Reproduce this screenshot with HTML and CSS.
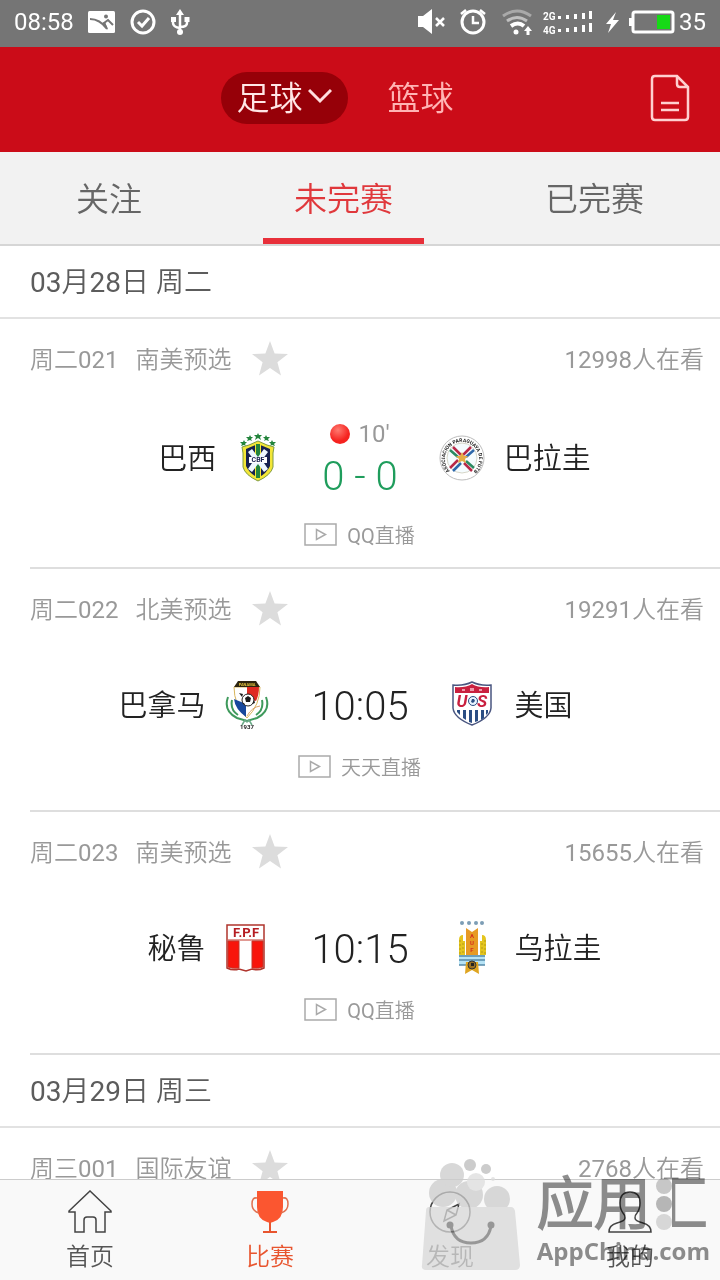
FILE: index.html
```html
<!DOCTYPE html>
<html lang="zh-CN">
<head>
  <meta charset="UTF-8">
  <meta name="viewport" content="width=device-width, initial-scale=1.0">
  <title>比赛</title>
  <link rel="stylesheet" href="styles.css">
</head>
<body>
  <!-- shared icons -->
  <svg class="sprite" aria-hidden="true">
    <symbol id="star" viewBox="0 0 36 36">
      <path fill="#dcdcdc" d="M18 0l4.600 12.600L36 13l-10.600 8.300L29 34.500 18 27 7 34.500l3.600-13.200L0 13l13.400-.400z"/>
    </symbol>
    <symbol id="play" viewBox="0 0 33 23">
      <rect x="1" y="1" width="31" height="21" fill="none" stroke="#aaa" stroke-width="1.500"/>
      <path d="M12.500 6.500v10l9-5z" fill="none" stroke="#aaa" stroke-width="1.500"/>
    </symbol>
  </svg>

  <div class="app">
    <div class="status">
      <span>08:58</span>
      <svg class="status-left" viewBox="0 0 104 28" width="104" height="28" aria-hidden="true">
        <rect x="1" y="3" width="27" height="22" rx="1.500" fill="#fff"/>
        <path d="M3 11c6 0 12 3 17 10l-3-6 4-3 5 5" fill="none" stroke="#757575" stroke-width="2"/>
        <path d="M15 15l3-1 3 8z" fill="#757575"/>
        <circle cx="19" cy="8.500" r="2" fill="#757575"/>
        <circle cx="56" cy="14" r="11" fill="none" stroke="#fff" stroke-width="3"/>
        <path d="M51 14l4 4 7-8" fill="none" stroke="#fff" stroke-width="3"/>
        <path d="M93 4v20M86 11v4q0 4 7 5M100 11v4q0 4-7 4" fill="none" stroke="#fff" stroke-width="2.500"/>
        <path d="M93 1l4 6h-8zM84 9h5v5h-5zM97.500 9h5v5h-5z" fill="#fff"/>
        <circle cx="93" cy="24" r="3" fill="#fff"/>
      </svg>
      <svg class="status-right" viewBox="0 0 260 28" width="260" height="28" aria-hidden="true">
        <path d="M1 8h5l9-7v25l-9-7H1z" fill="#fff"/>
        <path d="M19 10l8 8M27 10l-8 8" stroke="#fff" stroke-width="2.500"/>
        <circle cx="56" cy="14" r="11" fill="none" stroke="#fff" stroke-width="3"/>
        <path d="M56 8v7h6M44 6l5-4M68 6l-5-4" fill="none" stroke="#fff" stroke-width="2.500"/>
        <path d="M86 8q14-10 28 0" fill="none" stroke="#a9a9a9" stroke-width="3"/>
        <path d="M90 13q10-7 20 0" fill="none" stroke="#c0c0c0" stroke-width="3"/>
        <path d="M94 18q7-5 13 0" fill="none" stroke="#fff" stroke-width="4"/>
        <circle cx="99" cy="24" r="2.500" fill="#fff"/>
        <path d="M111 18l4 5h-2.500v4h-3v-4H107z" fill="#fff"/>
        <text class="status-net" x="126" y="12">2G</text>
        <text class="status-net" x="126" y="26">4G</text>
        <g fill="#fff">
          <path d="M141 8h3v3h-3zM149 7h3v4h-3zM157 6h3v5h-3zM165 5h3v6h-3zM172 3h3v8h-3z"/>
          <path d="M141 21h3v3h-3zM149 20h3v4h-3zM157 19h3v5h-3zM165 17h3v7h-3zM172 15h3v9h-3z"/>
          <path d="M199 4l-10 12h5l-3 9 11-13h-6z"/>
          <path d="M212 10h3v8h-3z"/>
        </g>
        <rect x="216" y="4" width="40" height="20" rx="2" fill="none" stroke="#fff" stroke-width="3"/>
        <rect x="240" y="7" width="13" height="14" fill="#16d916"/>
      </svg>
      <span>35</span>
    </div>

    <header class="topbar">
      <div class="sports">
        <button class="sport sport-on" type="button">足球
          <svg viewBox="0 0 24 16" width="24" height="16" aria-hidden="true"><path d="M1 2l11 11L23 2" fill="none" stroke="#ffdede" stroke-width="3"/></svg>
        </button>
        <button class="sport" type="button">篮球</button>
      </div>
      <button class="orders" type="button" aria-label="订单">
        <svg viewBox="0 0 40 48" width="40" height="48" aria-hidden="true">
          <path d="M5 2h22l11 11v30q0 3-3 3H5q-3 0-3-3V5q0-3 3-3zM27 2v8q0 3 3 3h8M11 29h18M11 36h18" fill="none" stroke="#ffd0d0" stroke-width="2.500"/>
        </svg>
      </button>
    </header>

    <div class="tabs">
      <button class="tab" type="button"><span>关注</span></button>
      <button class="tab tab-on" type="button"><span>未完赛</span></button>
      <button class="tab" type="button"><span>已完赛</span></button>
    </div>

    <main class="list">
      <h2 class="date">03月28日 周二</h2>

      <article class="match match-live">
        <div class="meta">
          <span>周二021</span><span>南美预选</span>
          <button class="fav" type="button" aria-label="收藏"><svg width="36" height="36"><use href="#star"/></svg></button>
          <span class="viewers">12998人在看</span>
        </div>
        <div class="teams">
          <div class="team home">
            <span>巴西</span>
            <svg class="crest" viewBox="0 0 44 50" aria-hidden="true">
              <g fill="#23843c">
                <path d="M22 0l1 2h3l-2 2 1 3-3-2-3 2 1-3-2-2h3zM14 2l1 2h2l-2 2 1 2-2-1-3 1 1-2-2-2h3zM30 2l1 2h3l-2 2 1 2-3-1-2 1 1-2-2-2h2zM8 7l1 2h2l-2 2 1 2-2-1-3 1 1-2-2-2h3zM36 7l1 2h3l-2 2 1 2-3-1-2 1 1-2-2-2h2z"/>
              </g>
              <path d="M6 14l7-2 9-4 9 4 7 2-1 6v14q-2 8-15 14Q9 42 7 34V20z" fill="#f3e637" stroke="#7f9a42" stroke-width="1"/>
              <path d="M10 16l12-5 12 5v17q-3 7-12 12-9-5-12-12z" fill="#17214f"/>
              <path d="M19 11h6v34h-6z" fill="#f3e637"/>
              <path d="M20 11h4v34h-4z" fill="#23843c"/>
              <path d="M12 19l4-3 6 8 6-8 4 3-6 8 6 9-4 3-6-8-6 8-4-3 6-9z" fill="#eef8ff"/>
              <path d="M13 24h18v6H13z" fill="#fff"/>
              <text x="22" y="29" class="crest-text" fill="#17214f">CBF</text>
            </svg>
          </div>
          <div class="center">
            <div class="minute"><i class="live-dot"></i>10'</div>
            <div class="score">0 - 0</div>
          </div>
          <div class="team away">
            <svg class="crest" viewBox="0 0 44 50" aria-hidden="true">
              <defs><path id="ring" d="M10 38A17 17 0 1 1 34 38"/></defs>
              <circle cx="22" cy="25" r="22" fill="#fff" stroke="#bdbdbd"/>
              <circle cx="22" cy="25" r="15" fill="#f5fcff" stroke="#d6d6c8"/>
              <text class="crest-ring" fill="#222"><textPath href="#ring">ASOCIACION PARAGUAYA DE FUTBOL</textPath></text>
              <g stroke-width="2.500">
                <path d="M10 17l8 7M26 28l8 7" stroke="#2a8a62"/>
                <path d="M13 14l8 8M24 30l8 8" stroke="#b82948"/>
                <path d="M31 14l-8 8M18 27l-8 8" stroke="#b82948"/>
                <path d="M34 17l-8 7M21 30l-8 8" stroke="#2d68aa"/>
              </g>
              <path d="M22 19l2 4h4l-3 3 1 4-4-2-4 2 1-4-3-3h4z" fill="#e6ad45"/>
            </svg>
            <span>巴拉圭</span>
          </div>
        </div>
        <a class="stream" href="#"><svg width="33" height="23" aria-hidden="true"><use href="#play"/></svg>QQ直播</a>
      </article>

      <article class="match">
        <div class="meta">
          <span>周二022</span><span>北美预选</span>
          <button class="fav" type="button" aria-label="收藏"><svg width="36" height="36"><use href="#star"/></svg></button>
          <span class="viewers">19291人在看</span>
        </div>
        <div class="teams">
          <div class="team home">
            <span>巴拿马</span>
            <svg class="crest" viewBox="0 0 44 50" aria-hidden="true">
              <path d="M3 17q-5 14 9 21l10 3 10-3q14-7 9-21M7 20q-2 10 6 15M37 20q2 10-6 15" fill="none" stroke="#3f9a5c" stroke-width="2"/>
              <path d="M9 7h26q0 18-13 31Q9 25 9 7z" fill="#fff" stroke="#d8b55a"/>
              <path d="M22 7h12q0 8-3 14l-9-3z" fill="#df2a22"/>
              <path d="M9 19l12 5v13Q10 29 9 19z" fill="#17489c"/>
              <path d="M9 7l4-6h18l4 6z" fill="#2d2510"/>
              <text x="22" y="6" class="crest-tiny" fill="#e5c33c">PANAMA</text>
              <circle cx="23" cy="20" r="6" fill="#fff" stroke="#222"/>
              <path d="M20 18l3-2 3 2-1 4h-4zM14 13l4 1-1 3zM27 24l3-1-1-3zM17 22l3 2-1 1z" fill="#1b1b1b"/>
              <path d="M35 26q-8 1-13 10" stroke="#dca36c" fill="none"/>
              <path d="M17 45l3-5 2 2 2-2 3 5" fill="none" stroke="#6aa987" stroke-width="1.500"/>
              <text x="22" y="49" class="crest-small" fill="#222">1937</text>
            </svg>
          </div>
          <div class="center"><div class="time">10:05</div></div>
          <div class="team away">
            <svg class="crest" viewBox="0 0 44 50" aria-hidden="true">
              <path d="M2 5q11 1 19-3 8 4 19 3v23q-1 10-19 17Q3 38 2 28z" fill="#fff" stroke="#4a5680" stroke-width="1.500"/>
              <path d="M4 7q10 1 17-3 7 4 17 3v6H4z" fill="#c9203f"/>
              <path d="M6 30h3v5l-3-3zM12 30h3v10l-3-2zM18 30h3v13l-3-1zM24 30h3v11l-3 1zM30 30h3v8l-3 2zM35 30h2v3l-2 2z" fill="#2b4d83"/>
              <text x="11" y="27" class="crest-us" fill="#c9203f">U</text>
              <text x="31" y="27" class="crest-us" fill="#c9203f">S</text>
              <circle cx="22" cy="21" r="4.500" fill="#e8f4ff" stroke="#2b4d83"/>
              <path d="M21 19h2l1 2-2 2-2-1z" fill="#2b4d83"/>
              <path d="M11 9h3v2h-3zM19 8h4v3h-4zM28 9h3v2h-3z" fill="#ef9aac"/>
            </svg>
            <span>美国</span>
          </div>
        </div>
        <a class="stream" href="#"><svg width="33" height="23" aria-hidden="true"><use href="#play"/></svg>天天直播</a>
      </article>

      <article class="match">
        <div class="meta">
          <span>周二023</span><span>南美预选</span>
          <button class="fav" type="button" aria-label="收藏"><svg width="36" height="36"><use href="#star"/></svg></button>
          <span class="viewers">15655人在看</span>
        </div>
        <div class="teams">
          <div class="team home">
            <span>秘鲁</span>
            <svg class="crest" viewBox="0 0 44 50" aria-hidden="true">
              <path d="M2 2h37v43q-6 3-12 1l-6 2-7-2q-6 2-12-1z" fill="#fff" stroke="#b0342c" stroke-width="1.500"/>
              <path d="M3 17h35M3 18h11v27q-6 1-11-1zM27 18h11v26q-5 2-11 1z" fill="#f8150b" stroke="#c3372a" stroke-width="1"/>
              <text x="21" y="14" class="crest-fpf" fill="#b51d22">F.P.F</text>
            </svg>
          </div>
          <div class="center"><div class="time">10:15</div></div>
          <div class="team away">
            <svg class="crest" viewBox="0 0 44 50" aria-hidden="true">
              <g fill="#7d9db5"><circle cx="11" cy="0" r="2"/><circle cx="18" cy="0" r="2"/><circle cx="25" cy="0" r="2"/><circle cx="31" cy="0" r="2"/></g>
              <path d="M15 5l6 4 6-4v27H15z" fill="#e79a24"/>
              <path d="M8 17q0-5 4-5v6h2v14H8zM29 18h2v-6q4 0 4 5v15h-6z" fill="#e4c51e"/>
              <path d="M9 17v14M12 20v11M31 20v11M34 17v14" stroke="#b59a18" stroke-width="1" stroke-dasharray="2 2"/>
              <text x="21" y="15" class="crest-small" fill="#d5301f">A</text>
              <text x="21" y="22" class="crest-small" fill="#d5301f">U</text>
              <text x="21" y="29" class="crest-small" fill="#d5301f">F</text>
              <path d="M8 32h26v10H8z" fill="#b7e3f5"/>
              <path d="M8 33h26M8 37h26M8 42h26" stroke="#5689a8" stroke-width="1.500"/>
              <path d="M15 39h12l1 12-7-4-7 4z" fill="#dfa521"/>
              <circle cx="21" cy="42" r="4" fill="#9a7021" stroke="#333"/>
              <path d="M20 40h3v3h-3z" fill="#222"/>
            </svg>
            <span>乌拉圭</span>
          </div>
        </div>
        <a class="stream" href="#"><svg width="33" height="23" aria-hidden="true"><use href="#play"/></svg>QQ直播</a>
      </article>

      <h2 class="date">03月29日 周三</h2>

      <article class="match">
        <div class="meta">
          <span>周三001</span><span>国际友谊</span>
          <button class="fav" type="button" aria-label="收藏"><svg width="36" height="36"><use href="#star"/></svg></button>
          <span class="viewers">2768人在看</span>
        </div>
      </article>
    </main>

    <nav class="nav">
      <a href="#">
        <svg viewBox="0 0 44 44" width="44" height="44" aria-hidden="true"><path d="M1 21L22 1l21 20v1h-6v20h-9V30q0-3-3-3h-6q-3 0-3 3v12H7V22H1z" fill="none" stroke="#444" stroke-width="1.500"/></svg>
        首页
      </a>
      <a class="nav-on" href="#">
        <svg viewBox="0 0 44 44" width="44" height="44" aria-hidden="true">
          <path d="M9 1h26v16q0 12-10 15l-3 1-3-1Q9 29 9 17z" fill="#fb5630"/>
          <path d="M9 8Q4 7 4 14t7 9M35 8q5-1 5 6t-7 9" fill="none" stroke="#e0704f" stroke-width="1.500"/>
          <path d="M22 32v9M15 42h14" stroke="#e8552f" stroke-width="2"/>
        </svg>
        比赛
      </a>
      <a href="#">
        <svg viewBox="0 0 44 44" width="44" height="44" aria-hidden="true"><circle cx="22" cy="22" r="20" fill="none" stroke="#444" stroke-width="1.500"/><path d="M31 14l-3 11-12 6 3-11zM19 20l9 5" fill="none" stroke="#444" stroke-width="1.500"/></svg>
        发现
      </a>
      <a href="#">
        <svg viewBox="0 0 44 44" width="44" height="44" aria-hidden="true"><path d="M1 42q0-7 8-9 8-2 8-5 0-3-2-5-3-4-3-10Q12 2 22 2t10 11q0 6-3 10-2 2-2 5 0 3 8 5t8 9z" fill="none" stroke="#444" stroke-width="1.500"/></svg>
        我的
      </a>
    </nav>

    <div class="mark">
      <svg class="mark-bag" viewBox="0 0 100 114" width="100" height="114" aria-hidden="true">
        <g fill="#ccc">
          <circle cx="22" cy="36" r="14"/><circle cx="31" cy="18" r="12"/><circle cx="49" cy="8" r="6" fill="#bbb"/><circle cx="65" cy="12" r="5" fill="#bbb"/>
          <circle cx="48" cy="38" r="14"/><circle cx="55" cy="25" r="9" fill="#ddd"/><circle cx="76" cy="42" r="13"/><circle cx="72" cy="22" r="2" fill="#ddd"/>
        </g>
        <path d="M8 50h82q3 0 4 4l5 54q0 5-5 5H5q-5 0-4-5L5 54q0-4 3-4z" fill="#d8d8d8"/>
        <path d="M30 69q3 17 20 17t20-17" fill="none" stroke="#777" stroke-width="3"/>
        <circle cx="29" cy="68" r="3.500" fill="#777"/><circle cx="70" cy="68" r="3.500" fill="#777"/>
      </svg>
      <div class="mark-text">
        <div class="mark-name">应用<span>汇</span>
          <svg viewBox="0 0 16 54" width="16" height="54" aria-hidden="true"><circle cx="8" cy="8" r="8" fill="#ccc"/><circle cx="8" cy="26" r="8" fill="#bbb"/><circle cx="8" cy="44" r="8" fill="#ddd"/></svg>
        </div>
        <div class="mark-site">AppChina.com</div>
      </div>
    </div>
  </div>
</body>
</html>
```
FILE: styles.css
```css
* {
  margin: 0;
  padding: 0;
  box-sizing: border-box;
}
body {
  font-family: Roboto, "Noto Sans CJK SC DemiLight", "Noto Sans CJK SC", sans-serif;
  font-weight: 400;
  background: #fff;
  color: #222;
}
button {
  font: inherit;
  color: inherit;
  background: none;
  border: none;
  cursor: pointer;
}
a {
  color: inherit;
  text-decoration: none;
}
svg {
  display: block;
  flex: none;
}
.sprite {
  position: absolute;
  width: 0;
  height: 0;
}
.app {
  position: relative;
  display: flex;
  flex-direction: column;
  height: 100vh;
  overflow: hidden;
}

/* status bar */
.status {
  display: flex;
  align-items: center;
  height: 47px;
  padding: 0 14px 3px;
  background: #757575;
  color: #fff;
  font-size: 24px;
}
.status-left {
  margin-left: 13px;
}
.status-right {
  margin-left: auto;
  margin-right: 2px;
}
.status-net {
  font-size: 10px;
  font-weight: 700;
  fill: #fff;
}

/* top bar */
.topbar {
  display: grid;
  grid-template-columns: 1fr auto 1fr;
  align-items: center;
  height: 105px;
  padding: 0 30px 4px;
  background: #cb0c18;
  color: #ffb4b4;
  font-size: 33px;
}
.sports {
  grid-column: 2;
  display: flex;
}
.sport {
  display: flex;
  align-items: center;
  gap: 5px;
  height: 52px;
  padding: 0 46px 4px 40px;
}
.sport-on {
  padding: 0 16px 4px;
  border-radius: 26px;
  background: #960008;
  color: #ffe6e6;
}
.orders {
  justify-self: end;
}

/* filter tabs */
.tabs {
  display: flex;
  height: 94px;
  background: #f2f2f2;
  border-bottom: 2px solid #d6d6d6;
  color: #666;
  font-size: 33px;
}
.tab {
  flex: 1 1 auto;
  display: flex;
  justify-content: center;
}
.tab span {
  height: 92px;
  padding: 0 31px;
  line-height: 96px;
}
.tab-on {
  color: #e0383c;
}
.tab-on span {
  border-bottom: 6px solid #e8303a;
}

/* match list */
.list {
  flex: 1;
  min-height: 0;
  overflow-y: auto;
  scrollbar-width: none;
}
.date {
  height: 73px;
  padding-left: 30px;
  border-bottom: 2px solid #e2e2e2;
  line-height: 74px;
  font-size: 28px;
  font-weight: 400;
  color: #5c5c5c;
}
.match {
  margin-left: 30px;
  padding-top: 22px;
  border-bottom: 2px solid #dedede;
}
.meta {
  display: flex;
  align-items: center;
  gap: 17px;
  height: 36px;
  padding-right: 16px;
  color: #999;
  font-size: 24px;
}
.meta span {
  padding-bottom: 4px;
}
.fav {
  margin-left: 4px;
}
.meta .viewers {
  margin-left: auto;
}
.teams {
  display: grid;
  grid-template-columns: 1fr auto 1fr;
  align-items: center;
  gap: 42px;
  margin: 52px 30px 0 0;
  height: 52px;
}
.team {
  display: flex;
  align-items: center;
  gap: 20px;
  font-size: 29px;
}
.team span {
  padding-bottom: 4px;
}
.home {
  justify-content: flex-end;
}
.crest {
  width: 44px;
  height: 50px;
  overflow: visible;
}
.crest-text,
.crest-small,
.crest-tiny,
.crest-us,
.crest-fpf {
  font-weight: 700;
  text-anchor: middle;
}
.crest-text {
  font-size: 7px;
}
.crest-small {
  font-size: 6px;
}
.crest-tiny {
  font-size: 4px;
}
.crest-ring {
  font-size: 5px;
  font-weight: 700;
}
.crest-us {
  font-size: 17px;
  font-style: italic;
}
.crest-fpf {
  font-size: 13px;
}
.time,
.score {
  padding-top: 4px;
  font-size: 40px;
  font-weight: 300;
  line-height: 44px;
}
.score {
  color: #1f9d5c;
}
.minute {
  display: flex;
  align-items: center;
  justify-content: center;
  gap: 8px;
  height: 34px;
  color: #999;
  font-size: 24px;
}
.live-dot {
  width: 20px;
  height: 20px;
  border-radius: 50%;
  background: radial-gradient(circle at 40% 30%, #ff7a70, #f5221f 60%);
}
.stream {
  display: flex;
  align-items: center;
  justify-content: center;
  gap: 10px;
  height: 26px;
  margin: 22px 31px 31px 0;
  color: #999;
  font-size: 20px;
}
.match-live .teams {
  margin-top: 40px;
  height: 82px;
}
.match-live .stream {
  margin-bottom: 20px;
}

/* bottom nav */
.nav {
  display: grid;
  grid-template-columns: repeat(4, 1fr);
  height: 101px;
  border-top: 1px solid #ccc;
  background: #f9f9f9;
  color: #555;
}
.nav a {
  display: flex;
  flex-direction: column;
  align-items: center;
  padding-top: 10px;
  gap: 6px;
  font-size: 24px;
  line-height: 34px;
}
.nav .nav-on {
  color: #e8552f;
}

/* store mark over the bottom corner */
.mark {
  position: absolute;
  right: 10px;
  bottom: 9px;
  display: flex;
  align-items: flex-end;
  gap: 16px;
  pointer-events: none;
}
.mark-bag {
  opacity: 0.75;
}
.mark-text {
  padding-bottom: 3px;
  color: #8e8e8e;
  mix-blend-mode: multiply;
}
.mark-name {
  position: relative;
  font-size: 57px;
  font-weight: 700;
  line-height: 58px;
}
.mark-name span {
  background: linear-gradient(to right, transparent 36%, #8e8e8e 36%);
  background-clip: text;
  color: transparent;
}
.mark-name svg {
  position: absolute;
  right: 38px;
  top: 2px;
}
.mark-site {
  font-family: "Open Sans", sans-serif;
  font-size: 24px;
  font-weight: 700;
  line-height: 34px;
}
```
